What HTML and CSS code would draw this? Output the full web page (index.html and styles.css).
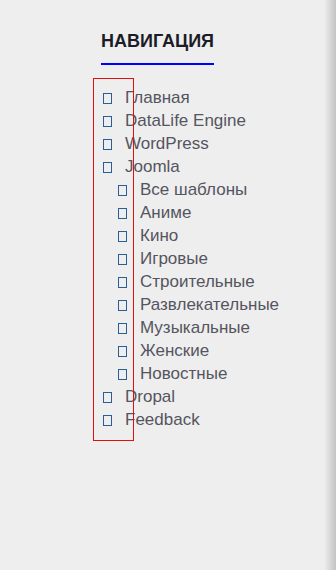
FILE: index.html
```html
<!DOCTYPE html>
<html lang="ru">
<head>
<meta charset="utf-8">
<title>Навигация</title>
<link rel="stylesheet" href="styles.css">
</head>
<body>
<div class="page">
  <nav class="nav">
    <h2 class="nav-title">НАВИГАЦИЯ</h2>
    <ul class="menu">
      <li class="item"><span class="ico"></span><span>Главная</span></li>
      <li class="item"><span class="ico"></span><span>DataLife Engine</span></li>
      <li class="item"><span class="ico"></span><span>WordPress</span></li>
      <li class="item"><span class="ico"></span><span>Joomla</span></li>
      <li class="item sub"><span class="ico"></span><span>Все шаблоны</span></li>
      <li class="item sub"><span class="ico"></span><span>Аниме</span></li>
      <li class="item sub"><span class="ico"></span><span>Кино</span></li>
      <li class="item sub"><span class="ico"></span><span>Игровые</span></li>
      <li class="item sub"><span class="ico"></span><span>Строительные</span></li>
      <li class="item sub"><span class="ico"></span><span>Развлекательные</span></li>
      <li class="item sub"><span class="ico"></span><span>Музыкальные</span></li>
      <li class="item sub"><span class="ico"></span><span>Женские</span></li>
      <li class="item sub"><span class="ico"></span><span>Новостные</span></li>
      <li class="item"><span class="ico"></span><span>Dropal</span></li>
      <li class="item"><span class="ico"></span><span>Feedback</span></li>
    </ul>
    <div class="outline"></div>
  </nav>
</div>
</body>
</html>
```

FILE: styles.css
```css
html, body {
  margin: 0;
  padding: 0;
}
body {
  min-height: 570px;
  background: linear-gradient(to right, #eeeeee calc(100% - 12px), #c4c4c4 100%);
  font-family: "Liberation Sans", Arial, sans-serif;
}
.page {
  padding: 29px 0 0 101px;
}
.nav {
  position: relative;
}
.nav-title {
  display: inline-block;
  margin: 0;
  font-size: 18px;
  font-weight: bold;
  color: #1c1c28;
  line-height: 24px;
  padding-bottom: 10px;
  border-bottom: 2px solid #0000ff;
}
.menu {
  list-style: none;
  margin: 21px 0 0 0;
  padding: 0;
}
.item {
  display: flex;
  align-items: center;
  height: 23px;
  font-size: 17px;
  color: #55555f;
  padding-left: 2px;
}
.item.sub {
  padding-left: 17px;
}
.ico {
  box-sizing: border-box;
  width: 9px;
  height: 11px;
  border: 1px solid #2a5f94;
  margin-right: 13px;
  margin-top: 1px;
  flex: none;
}
.outline {
  position: absolute;
  left: -8px;
  top: 49px;
  width: 41px;
  height: 363px;
  border: 1px solid #e01010;
  box-sizing: border-box;
}
```
